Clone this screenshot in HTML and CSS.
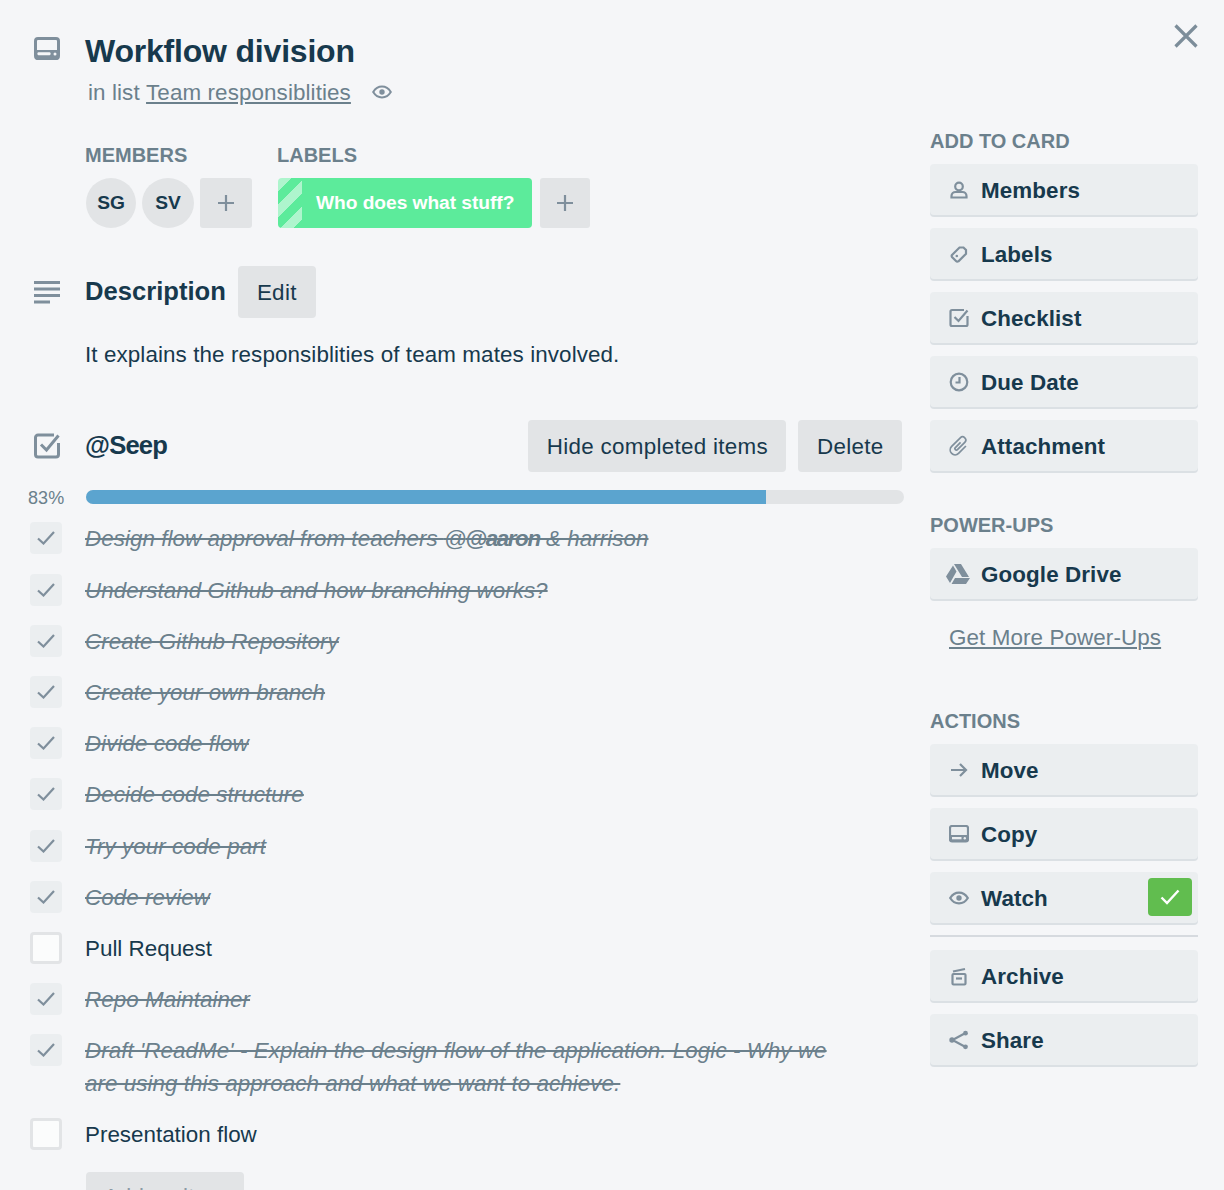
FILE: index.html
```html
<!DOCTYPE html>
<html lang="en">
<head>
    <meta charset="UTF-8">
    <title>Workflow division</title>
    <link rel="stylesheet" href="styles.css">
</head>
<body>
    <div class="card-window">
        <a class="close" href="#" aria-label="Close">
            <svg viewBox="0 0 24 24" width="24" height="24"><path d="M1.5 1.5l21 21M22.5 1.5l-21 21"/></svg>
        </a>

        <div class="main">
            <div class="title-row">
                <svg class="side-icon title-icon" viewBox="0 0 26 23" width="26" height="23"><rect x="1.500" y="1.500" width="23" height="20" rx="2.500" class="ln thick"/><path d="M1 13h24v7a3 3 0 0 1-3 3H4a3 3 0 0 1-3-3z" class="fl"/><rect x="3.500" y="15.300" width="13" height="3" rx="1" fill="#f5f6f8"/><circle cx="21" cy="17" r="1.500" fill="#f5f6f8"/></svg>
                <h1>Workflow division</h1>
            </div>
            <p class="in-list">in list <a href="#">Team responsiblities</a>
                <svg class="eye" viewBox="0 0 20 14" width="20" height="14"><path d="M1.200 7C3.500 3.200 6.500 1.600 10 1.600S16.500 3.200 18.800 7c-2.300 3.800-5.300 5.400-8.800 5.400S3.500 10.800 1.200 7z" class="ln"/><circle cx="10" cy="7" r="2.700" class="fl"/></svg>
            </p>

            <div class="meta">
                <div class="meta-group members">
                    <h3>MEMBERS</h3>
                    <div class="meta-row">
                        <span class="avatar">SG</span>
                        <span class="avatar">SV</span>
                        <span class="plus"><svg viewBox="0 0 16 16" width="16" height="16"><path d="M8 0v16M0 8h16"/></svg></span>
                    </div>
                </div>
                <div class="meta-group">
                    <h3>LABELS</h3>
                    <div class="meta-row">
                        <span class="label">Who does what stuff?</span>
                        <span class="plus narrow"><svg viewBox="0 0 16 16" width="16" height="16"><path d="M8 0v16M0 8h16"/></svg></span>
                    </div>
                </div>
            </div>

            <div class="section-head desc-head">
                <svg class="side-icon" viewBox="0 0 26 24" width="26" height="24"><path d="M0 2.500h26M0 9h26M0 15.500h26M0 22h16" class="bars"/></svg>
                <h2>Description</h2>
                <button class="btn">Edit</button>
            </div>
            <p class="description">It explains the responsiblities of team mates involved.</p>

            <div class="section-head check-head">
                <svg class="side-icon" viewBox="0 0 26 26" width="26" height="26"><path d="M20 2H4a2.500 2.500 0 0 0-2.500 2.500v17A2.500 2.500 0 0 0 4 24h18a2.500 2.500 0 0 0 2.500-2.500V10" class="ln thick"/><path d="M7 11.500l5.500 5.500L24.500 2.500" class="ln thick"/></svg>
                <h2 class="tight">@Seep</h2>
                <div class="check-actions">
                    <button class="btn">Hide completed items</button>
                    <button class="btn">Delete</button>
                </div>
            </div>

            <div class="progress">
                <span class="percent">83%</span>
                <div class="bar"><div class="bar-fill" style="width: 83.1%"></div></div>
            </div>

            <ul class="checklist">
                <li class="done"><span class="box"><svg viewBox="0 0 18 14" width="18" height="14"><path d="M1 7.500l5.500 5L17 1"/></svg></span><span class="txt">Design flow approval from teachers <span class="mention">@<b>@aaron</b></span> &amp; harrison</span></li>
                <li class="done"><span class="box"><svg viewBox="0 0 18 14" width="18" height="14"><path d="M1 7.500l5.500 5L17 1"/></svg></span><span class="txt">Understand Github and how branching works?</span></li>
                <li class="done"><span class="box"><svg viewBox="0 0 18 14" width="18" height="14"><path d="M1 7.500l5.500 5L17 1"/></svg></span><span class="txt">Create Github Repository</span></li>
                <li class="done"><span class="box"><svg viewBox="0 0 18 14" width="18" height="14"><path d="M1 7.500l5.500 5L17 1"/></svg></span><span class="txt">Create your own branch</span></li>
                <li class="done"><span class="box"><svg viewBox="0 0 18 14" width="18" height="14"><path d="M1 7.500l5.500 5L17 1"/></svg></span><span class="txt">Divide code flow</span></li>
                <li class="done"><span class="box"><svg viewBox="0 0 18 14" width="18" height="14"><path d="M1 7.500l5.500 5L17 1"/></svg></span><span class="txt">Decide code structure</span></li>
                <li class="done"><span class="box"><svg viewBox="0 0 18 14" width="18" height="14"><path d="M1 7.500l5.500 5L17 1"/></svg></span><span class="txt">Try your code part</span></li>
                <li class="done"><span class="box"><svg viewBox="0 0 18 14" width="18" height="14"><path d="M1 7.500l5.500 5L17 1"/></svg></span><span class="txt">Code review</span></li>
                <li><span class="box"></span><span class="txt">Pull Request</span></li>
                <li class="done"><span class="box"><svg viewBox="0 0 18 14" width="18" height="14"><path d="M1 7.500l5.500 5L17 1"/></svg></span><span class="txt">Repo Maintainer</span></li>
                <li class="done"><span class="box"><svg viewBox="0 0 18 14" width="18" height="14"><path d="M1 7.500l5.500 5L17 1"/></svg></span><span class="txt">Draft 'ReadMe' - Explain the design flow of the application. Logic - Why we are using this approach and what we want to achieve.</span></li>
                <li><span class="box"></span><span class="txt">Presentation flow</span></li>
            </ul>
            <button class="btn add-item">Add an item</button>
        </div>

        <aside class="sidebar">
            <h3>ADD TO CARD</h3>
            <a class="side-btn" href="#"><svg viewBox="0 0 18 18" width="18" height="18"><circle cx="9" cy="5.500" r="3.800" class="ln"/><path d="M1.500 16.500v-1.500c0-2.500 2-4 4-4h7c2 0 4 1.500 4 4v1.500z" class="ln"/></svg>Members</a>
            <a class="side-btn" href="#"><svg viewBox="0 0 18 18" width="18" height="18"><path d="M2 10l7.500-7.500h4l2.500 2.500v3.800l-7.500 7.500q-1.500.7-2.500-.3l-4-4q-.7-1 0-2z" class="ln"/><circle cx="6.800" cy="11" r="1.300" class="fl"/></svg>Labels</a>
            <a class="side-btn" href="#"><svg viewBox="0 0 20 20" width="20" height="20"><path d="M15 2H3a1.500 1.500 0 0 0-1.500 1.500v13A1.500 1.500 0 0 0 3 18h14a1.500 1.500 0 0 0 1.500-1.500V8" class="ln"/><path d="M5.500 9l4 4 9-10.500" class="ln"/></svg>Checklist</a>
            <a class="side-btn" href="#"><svg viewBox="0 0 20 20" width="20" height="20"><circle cx="10" cy="10" r="8.300" class="ln"/><path d="M10.500 5v5.500H6.500" class="ln"/></svg>Due Date</a>
            <a class="side-btn" href="#"><svg viewBox="0 0 18 18" width="22" height="22"><g transform="rotate(45 9 9)"><path d="M13 5v8.500a4 4 0 0 1-8 0V3.500a2.600 2.600 0 0 1 5.200 0V12a1.200 1.200 0 0 1-2.400 0V6" class="ln clip"/></g></svg>Attachment</a>

            <h3 class="gap-top">POWER-UPS</h3>
            <a class="side-btn drive" href="#"><svg viewBox="0 0 24 20" width="24" height="20"><path d="M8 0h7l8 13h-7zM7 1.500l3.500 6L4 19 0 12.500zM9 14h15l-4 6H5.500z" class="fl"/></svg>Google Drive</a>
            <a class="more-link" href="#">Get More Power-Ups</a>

            <h3 class="actions-title">ACTIONS</h3>
            <a class="side-btn" href="#"><svg viewBox="0 0 18 18" width="18" height="18"><path d="M1 9h15M10 3l6 6-6 6" class="ln"/></svg>Move</a>
            <a class="side-btn" href="#"><svg viewBox="0 0 20 18" width="20" height="18"><rect x="1" y="1" width="18" height="15.500" rx="2" class="ln"/><path d="M1 10h18v4.500a2.500 2.500 0 0 1-2.500 2.500h-13A2.500 2.500 0 0 1 1 14.500z" class="fl"/><rect x="3" y="12" width="9.500" height="2.300" fill="#ebeef0"/><circle cx="15.800" cy="13.200" r="1.200" fill="#ebeef0"/></svg>Copy</a>
            <a class="side-btn" href="#"><svg viewBox="0 0 20 14" width="20" height="14"><path d="M1.200 7C3.500 3.200 6.500 1.600 10 1.600S16.500 3.200 18.800 7c-2.300 3.800-5.300 5.400-8.800 5.400S3.500 10.800 1.200 7z" class="ln"/><circle cx="10" cy="7" r="2.700" class="fl"/></svg>Watch<span class="watch-on"><svg viewBox="0 0 20 16" width="20" height="16"><path d="M1.500 8.500l5.500 5.500L18.500 1.500"/></svg></span></a>
            <hr class="divider">
            <a class="side-btn" href="#"><svg viewBox="0 0 16 20" width="16" height="20"><path d="M2 5.500l12-2.500" class="ln"/><rect x="1.500" y="8" width="13" height="10.500" rx="1" class="ln"/><path d="M5 12.500h6" class="ln"/></svg>Archive</a>
            <a class="side-btn" href="#"><svg viewBox="0 0 20 20" width="20" height="20"><path d="M16.500 3L3.500 10l13 7" class="ln"/><circle cx="16.500" cy="3.200" r="2.400" class="fl"/><circle cx="3" cy="10" r="2.700" class="fl"/><circle cx="16.500" cy="16.800" r="2.400" class="fl"/></svg>Share</a>
        </aside>
    </div>
</body>
</html>
```

FILE: styles.css
```css
html, body {
    margin: 0;
    height: 1190px;
    overflow: hidden;
}

body {
    background-color: #f5f6f8;
    color: #17394d;
    font-family: "Liberation Sans", Arial, sans-serif;
    font-size: 22.4px;
    line-height: 32px;
    letter-spacing: 0.1px;
}

h1, h2, h3, p, ul {
    margin: 0;
    padding: 0;
}

a {
    color: inherit;
}

.ln {
    fill: none;
    stroke: #7f8f9c;
    stroke-width: 2.2;
}

.ln.thick {
    stroke-width: 3;
}

.ln.clip {
    stroke-width: 1.4;
}

.fl {
    fill: #7f8f9c;
}

.bars {
    fill: none;
    stroke: #7f8f9c;
    stroke-width: 3;
}

.card-window {
    display: flex;
    align-items: flex-start;
    position: relative;
    height: 1190px;
    padding-left: 30px;
}

.close {
    position: absolute;
    top: 24px;
    left: 1174px;
    height: 24px;
}

.close path {
    fill: none;
    stroke: #7c8d9a;
    stroke-width: 3.2;
}

/* main column */
.main {
    width: 874px;
    padding-top: 31px;
}

.title-row {
    display: flex;
    align-items: center;
    height: 40px;
}

.side-icon {
    flex: none;
    width: 26px;
    margin: 0 25px 0 4px;
}

.title-icon {
    margin-top: -5px;
}

h1 {
    font-size: 32px;
    line-height: 40px;
    font-weight: 700;
    letter-spacing: -0.2px;
}

.in-list {
    display: flex;
    align-items: center;
    margin: 6px 0 0 58px;
    height: 32px;
    color: #6b808c;
    white-space: pre;
}

.eye {
    margin: -2px 0 0 21px;
}

.eye .ln {
    stroke-width: 2;
}

.meta {
    display: flex;
    margin: 34px 0 0 56px;
}

.meta-group.members {
    width: 192px;
}

h3 {
    font-size: 20px;
    line-height: 24px;
    font-weight: 700;
    color: #6b808c;
    letter-spacing: 0;
}

.meta h3 {
    margin-left: -1px;
}

.meta-row {
    display: flex;
    gap: 6px;
    margin-top: 11px;
}

.avatar {
    width: 52px;
    height: 50px;
    border-radius: 50%;
    background-color: #e2e4e6;
    font-size: 19.2px;
    font-weight: 700;
    line-height: 50px;
    text-align: center;
    letter-spacing: 0;
}

.avatar:first-child {
    width: 50px;
}

.plus {
    display: flex;
    align-items: center;
    justify-content: center;
    width: 52px;
    height: 50px;
    border-radius: 3px;
    background-color: #e2e4e6;
}

.plus.narrow {
    width: 50px;
}

.plus path {
    stroke: #7f8f9c;
    stroke-width: 2.2;
}

.label {
    width: 254px;
    height: 50px;
    box-sizing: border-box;
    margin-right: 2px;
    padding-left: 38px;
    border-radius: 4px;
    background-color: #5ceb9b;
    background-image: repeating-linear-gradient(135deg, rgba(255,255,255,.5) 0 9.2px, transparent 9.2px 18.4px);
    background-size: 24px 50px;
    background-repeat: no-repeat;
    color: #fff;
    font-size: 19.2px;
    font-weight: 700;
    line-height: 50px;
    letter-spacing: -0.05px;
}

.section-head {
    display: flex;
    align-items: center;
}

h2 {
    margin-bottom: 2px;
    font-size: 25.6px;
    line-height: 32px;
    font-weight: 700;
    letter-spacing: 0;
}

h2.tight {
    letter-spacing: -0.8px;
}

.desc-head {
    margin-top: 38px;
    height: 52px;
}

.desc-head h2 {
    margin-right: 12px;
}

.desc-head .btn {
    width: 78px;
    padding: 1px 0 0;
}

.btn {
    height: 52px;
    padding: 1px 18.5px 0;
    border: none;
    border-radius: 4px;
    background-color: #e2e4e6;
    color: #17394d;
    font-family: inherit;
    font-size: 22.4px;
    letter-spacing: 0.3px;
}

.description {
    margin: 21px 0 0 55px;
}

.check-head {
    margin-top: 49px;
    height: 52px;
}

.check-actions {
    display: flex;
    gap: 12px;
    margin-left: auto;
    margin-right: 2px;
}

.progress {
    display: flex;
    align-items: center;
    margin: 18px 0 0 -2px;
    height: 14px;
}

.percent {
    width: 58px;
    padding-top: 2px;
    font-size: 18px;
    color: #6b808c;
}

.bar {
    width: 818px;
    height: 14px;
    border-radius: 7px;
    background-color: #e2e4e6;
    overflow: hidden;
}

.bar-fill {
    height: 100%;
    background-color: #5ba4cf;
}

/* checklist */
.checklist {
    list-style: none;
    margin-top: 18.4px;
}

.checklist li {
    display: flex;
    align-items: flex-start;
    padding-bottom: 18.2px;
}

.box {
    flex: none;
    display: flex;
    align-items: center;
    justify-content: center;
    box-sizing: border-box;
    width: 32px;
    height: 32px;
    margin-right: 23px;
    border-radius: 4px;
    background-color: #fbfcfc;
    border: 3px solid #e2e4e6;
}

.done .box {
    background-color: #ebeef0;
    border: none;
}

.box path {
    fill: none;
    stroke: #7f8f9c;
    stroke-width: 2.2;
}

.txt {
    width: 760px;
    line-height: 33px;
    letter-spacing: 0;
}

.done .txt {
    color: #6b808c;
    font-style: italic;
    text-decoration: line-through;
    letter-spacing: 0.05px;
}

.mention {
    letter-spacing: -1.4px;
}

.add-item {
    display: block;
    width: 158px;
    margin: 2.600px 0 0 56px;
    padding: 0 0 3px;
    color: #8c9aa5;
}

/* sidebar */
.sidebar {
    width: 268px;
    margin-left: 26px;
    padding-top: 129px;
}

.sidebar h3 {
    margin-bottom: 11px;
}

.side-btn {
    display: flex;
    align-items: center;
    position: relative;
    box-sizing: border-box;
    height: 51px;
    margin-bottom: 13px;
    padding: 2px 0 0 51px;
    border-radius: 4px;
    background-color: #ebeef0;
    box-shadow: 0 2px 0 #dbe0e4;
    font-weight: 700;
    text-decoration: none;
}

.side-btn svg {
    position: absolute;
    left: 29px;
    top: 26px;
    transform: translate(-50%, -50%);
}

.side-btn.drive svg {
    left: 28px;
}

.gap-top {
    margin-top: 42px;
}

.more-link {
    display: block;
    margin: 23px 0 0 19px;
    color: #6b808c;
}

.sidebar .actions-title {
    margin-top: 55px;
}

.watch-on {
    display: flex;
    align-items: center;
    justify-content: center;
    margin: -3px 6px 0 auto;
    width: 44px;
    height: 38px;
    border-radius: 4px;
    background-color: #61bd4f;
}

.side-btn .watch-on svg {
    position: static;
    transform: none;
}

.watch-on path {
    fill: none;
    stroke: #fff;
    stroke-width: 2.4;
}

.divider {
    height: 2px;
    margin: -1px 0 13px;
    border: none;
    background-color: #d6dadf;
}
```
